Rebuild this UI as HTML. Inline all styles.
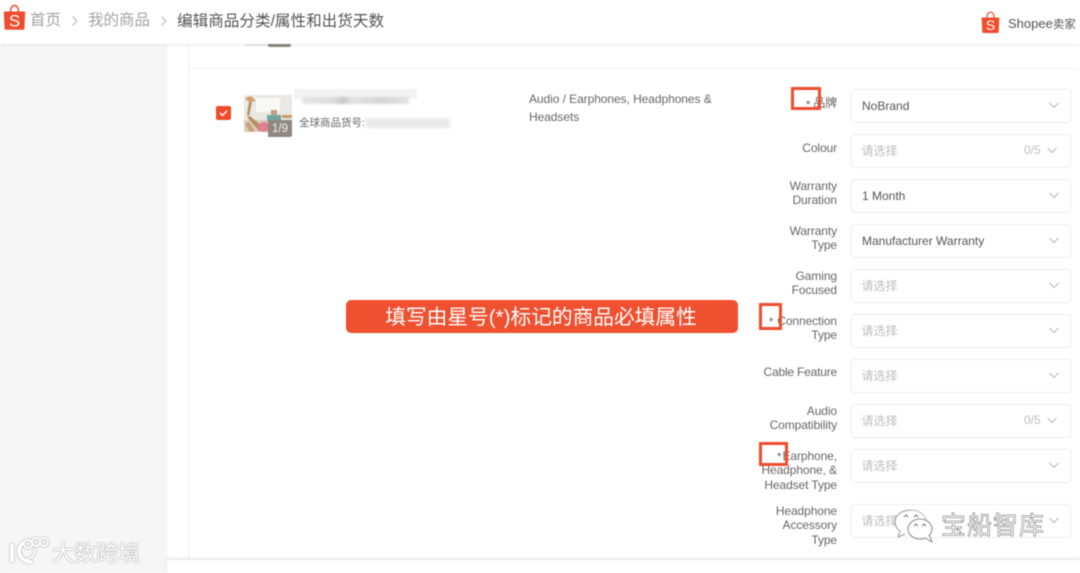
<!DOCTYPE html>
<html lang="zh"><head><meta charset="utf-8"><title>Shopee</title>
<style>
html,body{margin:0;padding:0;background:#fff}
#p{position:relative;width:1080px;height:573px;overflow:hidden;background:#fff;font-family:"Liberation Sans","Noto Sans CJK SC",sans-serif;color:#666;filter:blur(.45px)}
#p div,#p span,#p svg{position:absolute}
.t{white-space:nowrap}
.sel{left:851px;width:218px;height:32px;border:1px solid #ececec;border-radius:3px;background:#fff}
.v{left:10px;top:8px;font-size:12px;line-height:16px;color:#555;white-space:nowrap}
.ph{left:9.500px;top:8px;font-size:12px;line-height:17px;color:#bdbdbd;white-space:nowrap}
.c{left:172px;top:7px;font-size:12px;line-height:16px;color:#bdbdbd}
.ar{left:197px;top:12px}
.l{right:243px;font-size:12px;letter-spacing:-.1px;line-height:14.4px;text-align:right;color:#666;white-space:nowrap}
.r{border:3px solid #ee4d2d;box-sizing:border-box}
.star{font-size:11px;color:#555;line-height:12px}
</style></head><body>
<div id="p">
<div style="left:0;top:44px;width:167px;height:529px;background:#f6f6f6"></div>
<div style="left:188px;top:44px;width:1px;height:516px;background:#efefef"></div>
<div style="left:188px;top:68px;width:892px;height:1px;background:#efefef"></div>
<div style="left:245px;top:44px;width:24px;height:2px;background:#ebe9e6"></div>
<div style="left:268px;top:44px;width:23px;height:3px;background:#8f8781;border-radius:0 0 2px 2px"></div>

<div style="left:0;top:0;width:1080px;height:44px;background:#fff;box-shadow:0 1px 3px rgba(0,0,0,.09)"></div>
<svg style="left:3px;top:4px" width="23" height="27" viewBox="0 0 23 27"><path d="M7.500 8C7.500 4 9 1.500 11.500 1.500S15.500 4 15.500 8" fill="none" stroke="#ee4d2d" stroke-width="1.500"/><path d="M.8 7.500H22.200L21.400 24.500Q21.300 25.800 20 25.800H3Q1.700 25.800 1.600 24.500Z" fill="#ee4d2d"/><text x="11.500" y="22.500" font-size="17" text-anchor="middle" fill="#fff" font-family="Liberation Sans">S</text></svg>
<div class="t" style="left:30px;top:10px;font-size:15.500px;line-height:21px;color:#a3a3a3">首页</div>
<svg style="left:71px;top:15px" width="8" height="12" viewBox="0 0 8 12"><path d="M1.500 1.500L6 6L1.500 10.500" fill="none" stroke="#b5b5b5" stroke-width="1"/></svg>
<div class="t" style="left:88px;top:10px;font-size:15.500px;line-height:21px;color:#a3a3a3">我的商品</div>
<svg style="left:160px;top:15px" width="8" height="12" viewBox="0 0 8 12"><path d="M1.500 1.500L6 6L1.500 10.500" fill="none" stroke="#b5b5b5" stroke-width="1"/></svg>
<div class="t" style="left:177px;top:11px;font-size:15.600px;line-height:21px;color:#555">编辑商品分类/属性和出货天数</div>

<svg style="left:981px;top:11px" width="19" height="23" viewBox="0 0 19 23"><path d="M6 6.500C6 3 7.300 1.200 9.500 1.200S13 3 13 6.500" fill="none" stroke="#ee4d2d" stroke-width="1.200"/><path d="M.6 6.500H18.400L17.700 21Q17.600 22 16.500 22H2.500Q1.400 22 1.300 21Z" fill="#ee4d2d"/><text x="9.500" y="19" font-size="14" text-anchor="middle" fill="#fff" font-family="Liberation Sans">S</text></svg>
<div class="t" style="left:1008px;top:15px;font-size:13px;line-height:17px;color:#555">Shopee<span style="position:static;font-size:11.500px">卖家</span></div>

<div style="left:216px;top:106px;width:15px;height:14px;background:#ee4d2d;border-radius:2px"></div>
<svg style="left:216px;top:106px" width="15" height="14" viewBox="0 0 15 14"><path d="M4 7L6.500 9.500L11 4.800" fill="none" stroke="#fff" stroke-width="1.400"/></svg>

<svg style="left:244px;top:95px" width="48" height="42" viewBox="0 0 48 42">
<rect width="48" height="37" fill="#e9e8e2"/>
<rect x="12" y="3" width="24" height="14" fill="#f8f8f5"/>
<rect x="0" y="25" width="48" height="12" fill="#d8cdbd"/>
<path d="M1 3L7 1L12 6L5 7Z" fill="#cf9e72"/>
<path d="M5 7L8 7L5 21L3 20Z" fill="#b98d62"/>
<path d="M3 22L6 21L20 33L15 36Z" fill="#b98d62"/>
<path d="M1 29L5 27L11 36L6 37Z" fill="#c8a078"/>
<rect x="23" y="20" width="14" height="6" fill="#6fa8a0"/>
<rect x="27" y="15" width="6" height="5" fill="#c79c85"/>
<ellipse cx="20" cy="32" rx="6" ry="5" fill="#df7f90"/>
<rect x="38" y="20" width="10" height="3" fill="#c79d70"/>
</svg>
<div style="left:268px;top:120px;width:24px;height:17px;background:#8f8781;border-radius:2px 0 2px 0;color:#f2f0ee;font-size:11.500px;line-height:18px;text-align:center">1/9</div>

<div style="left:294px;top:89px;width:123px;height:10px;background:#f3f3f3"></div>
<div style="left:302px;top:97px;width:107px;height:7px;background:linear-gradient(90deg,#e4e4e4,#dcdcdc 30%,#c8c8c8 38%,#e2e2e2 48%,#d4d4d4 75%,#e4e4e4);filter:blur(1px)"></div>
<div class="t" style="left:299px;top:116px;font-size:10.500px;line-height:14px;color:#666">全球商品货号:</div>
<div style="left:366px;top:118px;width:84px;height:10px;background:#e9e9e9;filter:blur(1.500px)"></div>

<div style="left:529px;top:90px;width:200px;font-size:12px;letter-spacing:-.07px;line-height:18px;color:#666">Audio / Earphones, Headphones &amp; Headsets</div>

<div class="l" style="top:96px;line-height:15px">品牌</div>
<div class="star t" style="left:806px;top:99px">*</div>
<div class="r" style="left:791px;top:87px;width:30px;height:23px"></div>
<div class="sel" style="top:89px"><span class="v">NoBrand</span><svg class="ar" width="10" height="7" viewBox="0 0 10 7"><path d="M.5 1L5 5.500L9.500 1" fill="none" stroke="#b5b5b5" stroke-width="1"/></svg></div>

<div class="l" style="top:141px">Colour</div>
<div class="sel" style="top:134px"><span class="ph">请选择</span><span class="c">0/5</span><svg class="ar" style="left:195px" width="10" height="7" viewBox="0 0 10 7"><path d="M.5 1L5 5.500L9.500 1" fill="none" stroke="#b5b5b5" stroke-width="1"/></svg></div>

<div class="l" style="top:179px">Warranty<br>Duration</div>
<div class="sel" style="top:179px"><span class="v">1 Month</span><svg class="ar" width="10" height="7" viewBox="0 0 10 7"><path d="M.5 1L5 5.500L9.500 1" fill="none" stroke="#b5b5b5" stroke-width="1"/></svg></div>

<div class="l" style="top:224px">Warranty<br>Type</div>
<div class="sel" style="top:224px"><span class="v">Manufacturer Warranty</span><svg class="ar" width="10" height="7" viewBox="0 0 10 7"><path d="M.5 1L5 5.500L9.500 1" fill="none" stroke="#b5b5b5" stroke-width="1"/></svg></div>

<div class="l" style="top:269px">Gaming<br>Focused</div>
<div class="sel" style="top:269px"><span class="ph">请选择</span><svg class="ar" width="10" height="7" viewBox="0 0 10 7"><path d="M.5 1L5 5.500L9.500 1" fill="none" stroke="#b5b5b5" stroke-width="1"/></svg></div>

<div class="l" style="top:314px">Connection<br>Type</div>
<div class="star t" style="left:769px;top:316px">*</div>
<div class="r" style="left:759px;top:303px;width:23px;height:27px"></div>
<div class="sel" style="top:314px"><span class="ph">请选择</span><svg class="ar" width="10" height="7" viewBox="0 0 10 7"><path d="M.5 1L5 5.500L9.500 1" fill="none" stroke="#b5b5b5" stroke-width="1"/></svg></div>

<div class="l" style="top:365px;letter-spacing:-.2px">Cable Feature</div>
<div class="sel" style="top:359px"><span class="ph">请选择</span><svg class="ar" width="10" height="7" viewBox="0 0 10 7"><path d="M.5 1L5 5.500L9.500 1" fill="none" stroke="#b5b5b5" stroke-width="1"/></svg></div>

<div class="l" style="top:404px">Audio<br>Compatibility</div>
<div class="sel" style="top:404px"><span class="ph">请选择</span><span class="c">0/5</span><svg class="ar" style="left:195px" width="10" height="7" viewBox="0 0 10 7"><path d="M.5 1L5 5.500L9.500 1" fill="none" stroke="#b5b5b5" stroke-width="1"/></svg></div>

<div class="l" style="top:449px">Earphone,<br>Headphone, &amp;<br>Headset Type</div>
<div class="star t" style="left:777px;top:451px">*</div>
<div class="r" style="left:759px;top:442px;width:29px;height:24px"></div>
<div class="sel" style="top:449px"><span class="ph">请选择</span><svg class="ar" width="10" height="7" viewBox="0 0 10 7"><path d="M.5 1L5 5.500L9.500 1" fill="none" stroke="#b5b5b5" stroke-width="1"/></svg></div>

<div class="l" style="top:504px">Headphone<br>Accessory<br>Type</div>
<div class="sel" style="top:504px"><span class="ph">请选择</span><svg class="ar" width="10" height="7" viewBox="0 0 10 7"><path d="M.5 1L5 5.500L9.500 1" fill="none" stroke="#b5b5b5" stroke-width="1"/></svg></div>

<div style="left:346px;top:300px;width:392px;height:33px;background:#ee5030;border-radius:5px;color:#fff;font-size:20.700px;line-height:35px;text-align:center;white-space:nowrap;text-indent:-2px">填写由星号(*)标记的商品必填属性</div>

<div style="left:167px;top:560px;width:913px;height:13px;background:#fff;box-shadow:0 -2px 3px rgba(0,0,0,.1)"></div>

<svg style="left:892px;top:506px" width="44" height="38" viewBox="0 0 44 38"><path d="M19 4C10 4 3 9 3 16C3 20 5 23 8 25L6 31L13 28" fill="#fff" fill-opacity=".7" stroke="#999" stroke-width="1"/><path d="M19 4C27 4 33 9 34 14" fill="none" stroke="#bbb" stroke-width="1"/><ellipse cx="28" cy="23" rx="12" ry="10" fill="#fff" stroke="#8a8a8a" stroke-width="1"/><path d="M33 32L40 36L37 29" fill="#fff" stroke="#8a8a8a" stroke-width="1"/><path d="M22 20L24 18L26 20M30 20L32 18L34 20M12 11L14 9L16 11M22 11L24 9L26 11" fill="none" stroke="#777" stroke-width="1"/></svg>
<div class="t" style="left:941px;top:511px;font-size:25px;line-height:30px;color:#fff;letter-spacing:1px;-webkit-text-stroke:.5px #666;font-weight:400">宝船智库</div>

<svg style="left:8px;top:536px;filter:drop-shadow(0 0 1px #999)" width="42" height="30" viewBox="0 0 42 30"><g fill="none" stroke="#fff" stroke-width="3.500"><path d="M4 8V26"/><path d="M16 6C8 12 9 25 24 26"/></g><g fill="none" stroke="#fff" stroke-width="1.800"><circle cx="20" cy="8" r="4"/><circle cx="28" cy="6" r="4"/><circle cx="36" cy="6" r="4"/><path d="M27 13C27 19 24 22 19 23"/></g></svg>
<div class="t" style="left:52px;top:540px;font-size:22px;line-height:27px;color:#fff;text-shadow:0 0 1.500px #999,0 0 1px #999">大数跨境</div>
</div>
</body></html>
